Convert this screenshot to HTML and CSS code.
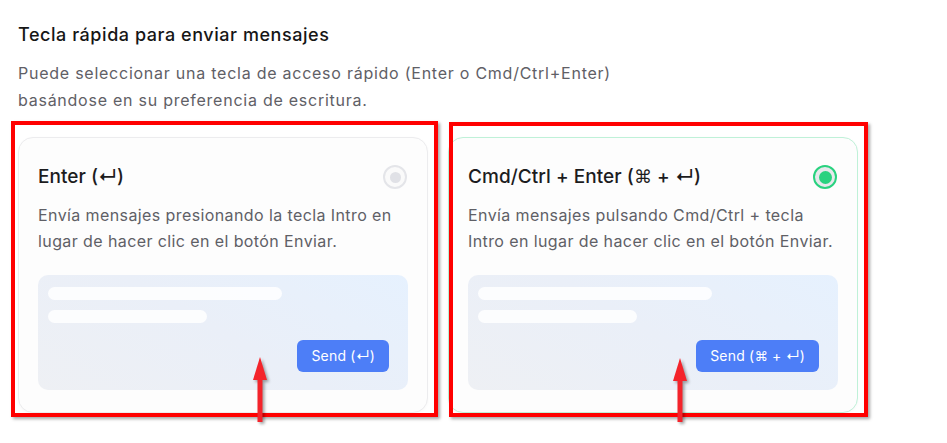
FILE: index.html
```html
<!DOCTYPE html>
<html lang="es">
<head>
    <meta charset="UTF-8">
    <meta name="viewport" content="width=device-width, initial-scale=1.0">
    <title>Tecla rápida para enviar mensajes</title>
    <link rel="stylesheet" href="styles.css">
</head>
<body>
    <div class="settings">
        <h2 class="section-title">Tecla rápida para enviar mensajes</h2>
        <p class="section-desc">Puede seleccionar una tecla de acceso rápido (Enter o Cmd/Ctrl+Enter)<br>basándose en su preferencia de escritura.</p>

        <div class="options">
            <div class="option">
                <div class="option-head">
                    <h3>Enter (<span class="ret">↵</span>)</h3>
                    <span class="radio"></span>
                </div>
                <p class="option-desc">Envía mensajes presionando la tecla Intro en<br>lugar de hacer clic en el botón Enviar.</p>
                <div class="preview">
                    <div class="bar bar-long"></div>
                    <div class="bar bar-short"></div>
                    <div class="preview-foot">
                        <button class="send-btn">Send (<span class="ret">↵</span>)</button>
                    </div>
                </div>
            </div>

            <div class="option selected">
                <div class="option-head">
                    <h3>Cmd/Ctrl + Enter (<span class="sym">⌘</span> + <span class="ret">↵</span>)</h3>
                    <span class="radio"></span>
                </div>
                <p class="option-desc">Envía mensajes pulsando Cmd/Ctrl + tecla<br>Intro en lugar de hacer clic en el botón Enviar.</p>
                <div class="preview">
                    <div class="bar bar-long"></div>
                    <div class="bar bar-short"></div>
                    <div class="preview-foot">
                        <button class="send-btn">Send (<span class="sym">⌘</span> + <span class="ret">↵</span>)</button>
                    </div>
                </div>
            </div>
        </div>

        <!-- annotation marks drawn over the screenshot -->
        <div class="mark mark-left"></div>
        <div class="mark mark-right"></div>
        <svg class="arrow arrow-left" width="20" height="70" viewBox="0 0 20 70">
            <polygon points="10,0 17,23 3,23" fill="#f4242b"/>
            <rect x="7.5" y="20" width="5" height="45" fill="#f4242b"/>
        </svg>
        <svg class="arrow arrow-right" width="20" height="70" viewBox="0 0 20 70">
            <polygon points="10,0 17,23 3,23" fill="#f4242b"/>
            <rect x="7.5" y="20" width="5" height="44" fill="#f4242b"/>
        </svg>
    </div>
</body>
</html>
```

FILE: styles.css
```css
:root {
    --text-dark: #1c1c1e;
    --text-muted: #5f6066;
    --blue: #4d7ef7;
    --green: #29d27f;
    --mark-red: #ff0000;
}

* {
    margin: 0;
    padding: 0;
    box-sizing: border-box;
}

body {
    font-family: Inter, "Noto Sans", sans-serif;
    background: #ffffff;
    color: var(--text-dark);
    overflow: hidden;
}

.sym {
    font-family: "DejaVu Sans", sans-serif;
    font-size: 0.95em;
}

.ret {
    font-family: Inter, "Noto Sans", "DejaVu Sans", sans-serif;
}

.settings {
    position: relative;
    padding: 23px 18px 0;
    width: 947px;
    height: 443px;
}

.section-title {
    font-size: 18px;
    font-weight: 500;
    line-height: 24px;
    letter-spacing: 0.55px;
    color: #161616;
}

.section-desc {
    margin-top: 13px;
    font-size: 16px;
    line-height: 27px;
    letter-spacing: 0.75px;
    color: var(--text-muted);
}

.options {
    margin-top: 23px;
    display: grid;
    grid-template-columns: 410px 410px;
    gap: 20px;
}

.option {
    height: 276px;
    padding: 26px 19px 0;
    background: #fdfdfd;
    border: 1px solid #ececee;
    border-radius: 15px;
    box-shadow: 0 1px 3px rgba(0,0,0,0.03);
}

.option.selected {
    border-color: #bff1d8;
}

.option-head {
    display: flex;
    align-items: center;
    justify-content: space-between;
    height: 26px;
}

.option-head h3 {
    font-size: 19px;
    font-weight: 500;
    line-height: 26px;
    letter-spacing: 0.05px;
    color: var(--text-dark);
}

.radio {
    width: 24px;
    height: 24px;
    border-radius: 50%;
    border: 2px solid #e4e5e9;
    background: #fafafa;
    display: flex;
    align-items: center;
    justify-content: center;
    margin-right: 1px;
}

.radio::after {
    content: "";
    width: 11px;
    height: 11px;
    border-radius: 50%;
    background: #e0e1e6;
}

.selected .radio {
    border-color: var(--green);
    background: #e7e8ec;
}

.selected .radio::after {
    width: 13px;
    height: 13px;
    background: var(--green);
}

.option-desc {
    margin-top: 12px;
    font-size: 16px;
    line-height: 26px;
    letter-spacing: 0.4px;
    color: var(--text-muted);
    white-space: nowrap;
}

.preview {
    margin-top: 21px;
    height: 115px;
    padding: 12px 19px 18px 10px;
    border-radius: 10px;
    background: linear-gradient(30deg, #eef0f4 0%, #eaeff8 50%, #e6f1fe 100%);
    display: flex;
    flex-direction: column;
}

.bar {
    height: 13px;
    border-radius: 7px;
    background: rgba(255,255,255,0.85);
}

.bar-long {
    width: 234px;
}

.bar-short {
    width: 159px;
    margin-top: 10px;
}

.preview-foot {
    margin-top: auto;
    display: flex;
    justify-content: flex-end;
}

.send-btn {
    height: 32px;
    padding: 0 14px;
    border: none;
    border-radius: 6px;
    background: var(--blue);
    color: #ffffff;
    font-family: Inter, "Noto Sans", sans-serif;
    font-size: 14px;
    letter-spacing: 0.2px;
    line-height: 32px;
    cursor: pointer;
}

/* red annotation boxes and arrows */
.mark {
    position: absolute;
    border: 4px solid var(--mark-red);
    box-shadow: 2px 2px 3px rgba(0,0,0,0.35);
}

.mark-left {
    left: 11px;
    top: 121px;
    width: 427px;
    height: 296px;
}

.mark-right {
    left: 449px;
    top: 122px;
    width: 419px;
    height: 295px;
}

.arrow {
    position: absolute;
    filter: drop-shadow(2px 2px 1.5px rgba(0,0,0,0.35));
}

.arrow-left {
    left: 250px;
    top: 357px;
}

.arrow-right {
    left: 670px;
    top: 358px;
}
```
